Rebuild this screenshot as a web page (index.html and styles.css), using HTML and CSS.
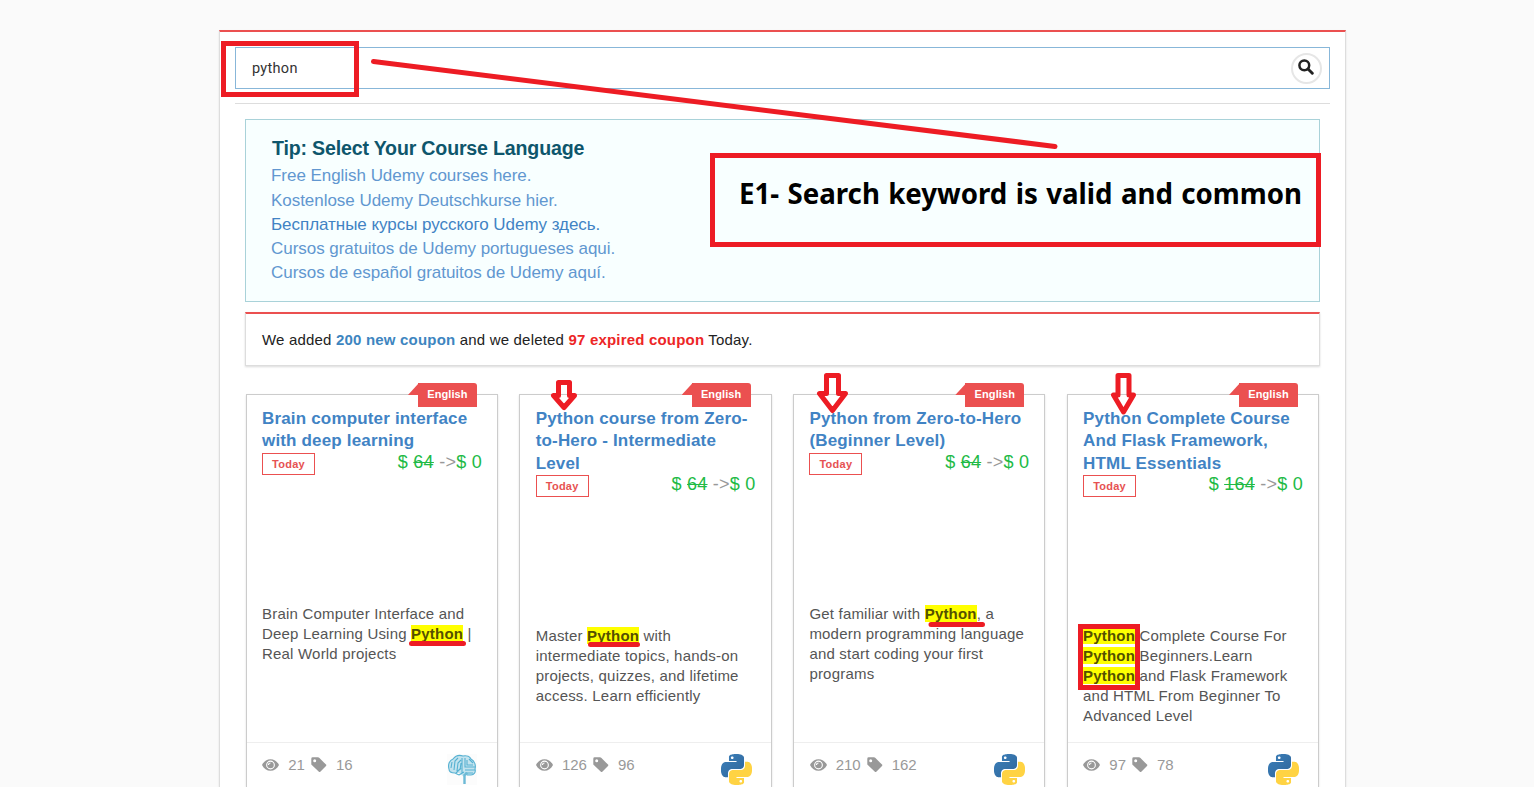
FILE: index.html
```html
<!DOCTYPE html>
<html lang="en">
<head>
<meta charset="utf-8">
<title>Course search</title>
<link rel="stylesheet" href="styles.css">
</head>
<body>
<svg width="0" height="0" class="defs">
  <defs>
    <linearGradient id="blue" x1="0" y1="0" x2="1" y2="1"><stop offset="0" stop-color="#3b80bb"/><stop offset="1" stop-color="#30669a"/></linearGradient>
    <path id="snake" d="M14.25.18l.9.2.73.26.59.3.45.32.34.34.25.34.16.33.1.3.04.26.02.2-.01.13V8.5l-.05.63-.13.55-.21.46-.26.38-.3.31-.33.25-.35.19-.35.14-.33.1-.3.07-.26.04-.21.02H8.77l-.69.05-.59.14-.5.22-.41.27-.33.32-.27.35-.2.36-.15.37-.1.35-.07.32-.04.27-.02.21v3.06H3.17l-.21-.03-.28-.07-.32-.12-.35-.18-.36-.26-.36-.36-.35-.46-.32-.59-.28-.73-.21-.88-.14-1.05-.05-1.23.06-1.22.16-1.04.24-.87.32-.71.36-.57.4-.44.42-.33.42-.24.4-.16.36-.1.32-.05.24-.01h.16l.06.01h8.16v-.83H6.18l-.01-2.75-.02-.37.05-.34.11-.31.17-.28.25-.26.31-.23.38-.2.44-.18.51-.15.58-.12.64-.1.71-.06.77-.04.84-.02 1.27.05zm-6.3 1.98l-.23.33-.08.41.08.41.23.34.33.22.41.09.41-.09.33-.22.23-.34.08-.41-.08-.41-.23-.33-.33-.22-.41-.09-.41.09z"/>
    <symbol id="python" viewBox="0 0 24 24"><use href="#snake" fill="url(#blue)"/><use href="#snake" fill="#ffd343" transform="rotate(180 12 12)"/></symbol>
    <symbol id="eye" viewBox="0 0 17 12"><path fill="#999" fill-rule="evenodd" d="M0 6C1.800 2.200 4.900.2 8.500.2S15.200 2.200 17 6c-1.800 3.800-4.900 5.800-8.500 5.800S1.800 9.800 0 6zM8.500 1.600a4.400 4.400 0 1 0 0 8.800 4.400 4.400 0 0 0 0-8.800z"/><circle cx="8.500" cy="6" r="3.300" fill="#999"/><path d="M6.500 6a2 2 0 0 1 2-2" fill="none" stroke="#fff" stroke-width="1.100"/></symbol>
    <symbol id="tag" viewBox="0 0 16 16"><path fill="#999" fill-rule="evenodd" d="M.3 1.700Q.3.300 1.700.300H7q.7 0 1.200.500l6.800 6.800q.7.700 0 1.400l-5.700 5.700q-.7.700-1.400 0L.8 8.100Q.3 7.600.3 6.900zM3.700 2.200a1.500 1.500 0 1 0 0 3 1.500 1.500 0 0 0 0-3z"/></symbol>
    <symbol id="brain" viewBox="0 0 31 31"><rect width="30" height="31" fill="#fcfcfc"/><path fill="#c3e3ee" d="M2 15C.5 10 3 6 6 5c3-4 7-4 10-3 4-1 7 1 8 3 4 2 5 7 4 10 1 3-1 6-4 6h-4l-3 2-5-4C7 19 3 19 2 15z"/><g fill="none" stroke="#56b1d2" stroke-width="1.100"><path d="M2 15C.5 10 3 6 6 5c3-4 7-4 10-3 4-1 7 1 8 3 4 2 5 7 4 10 1 3-1 6-4 6h-4M2 15c0 3 3 4 6 4l4 2"/><path d="M4 14l1-6M7 16l1-9 3-3M10 17l1-8 3-3M13 16l1-7M15 4v15M9 19l5-5M18 4v9h10M20 6v5h6M22 5l4 4M18 16h10M18 19h8M12 21l5-3"/></g><path fill="none" stroke="#6dbad6" stroke-width="2.400" d="M17.500 30V21l3-2"/></symbol>
  </defs>
</svg>
<main class="page">
  <div class="search"><input class="query" type="text" value="python" aria-label="Search"><button class="go" aria-label="Search"><svg width="16" height="16" viewBox="0 0 16 16"><circle cx="6.300" cy="6.300" r="4.900" fill="none" stroke="#222" stroke-width="2.500"/><path d="M10 10l4.300 4.200" stroke="#222" stroke-width="2.900" stroke-linecap="round"/></svg></button></div>
  <section class="results">
    <div class="tip">
      <h2 class="tip-title">Tip: Select Your Course Language</h2>
      <a class="lang first">Free English Udemy courses here.</a>
      <a class="lang">Kostenlose Udemy Deutschkurse hier.</a>
      <a class="lang strong">Бесплатные курсы русского Udemy здесь.</a>
      <a class="lang">Cursos gratuitos de Udemy portugueses aqui.</a>
      <a class="lang">Cursos de español gratuitos de Udemy aquí.</a>
    </div>
    <div class="notice">We added <b class="new">200 new coupon</b> and we deleted <b class="expired">97 expired coupon</b> Today.</div>
    <div class="cards">
      <article class="card">
        <span class="ribbon">English</span>
        <div class="body">
          <h3 class="title">Brain computer interface<br>with deep learning</h3>
          <div class="meta"><span class="today">Today</span><span class="price">$ <s>64</s> <i>-&gt;</i>$ 0</span></div>
          <p class="desc">Brain Computer Interface and<br>Deep Learning Using <mark>Python</mark> |<br>Real World projects</p>
        </div>
        <footer class="foot"><svg class="eye"><use href="#eye"/></svg><span class="views">21</span><svg class="tag"><use href="#tag"/></svg><span class="uses">16</span><svg class="logo"><use href="#brain"/></svg></footer>
      </article>
      <article class="card">
        <span class="ribbon">English</span>
        <div class="body">
          <h3 class="title">Python course from Zero-<br>to-Hero - Intermediate<br>Level</h3>
          <div class="meta"><span class="today">Today</span><span class="price">$ <s>64</s> <i>-&gt;</i>$ 0</span></div>
          <p class="desc">Master <mark>Python</mark> with<br>intermediate topics, hands-on<br>projects, quizzes, and lifetime<br>access. Learn efficiently</p>
        </div>
        <footer class="foot"><svg class="eye"><use href="#eye"/></svg><span class="views">126</span><svg class="tag"><use href="#tag"/></svg><span class="uses">96</span><svg class="logo"><use href="#python"/></svg></footer>
      </article>
      <article class="card">
        <span class="ribbon">English</span>
        <div class="body">
          <h3 class="title">Python from Zero-to-Hero<br>(Beginner Level)</h3>
          <div class="meta"><span class="today">Today</span><span class="price">$ <s>64</s> <i>-&gt;</i>$ 0</span></div>
          <p class="desc">Get familiar with <mark>Python</mark>, a<br>modern programming language<br>and start coding your first<br>programs</p>
        </div>
        <footer class="foot"><svg class="eye"><use href="#eye"/></svg><span class="views">210</span><svg class="tag"><use href="#tag"/></svg><span class="uses">162</span><svg class="logo"><use href="#python"/></svg></footer>
      </article>
      <article class="card">
        <span class="ribbon">English</span>
        <div class="body">
          <h3 class="title">Python Complete Course<br>And Flask Framework,<br>HTML Essentials</h3>
          <div class="meta"><span class="today">Today</span><span class="price">$ <s>164</s> <i>-&gt;</i>$ 0</span></div>
          <p class="desc"><mark>Python</mark> Complete Course For<br><mark>Python</mark> Beginners.Learn<br><mark>Python</mark> and Flask Framework<br>and HTML From Beginner To<br>Advanced Level</p>
        </div>
        <footer class="foot"><svg class="eye"><use href="#eye"/></svg><span class="views">97</span><svg class="tag"><use href="#tag"/></svg><span class="uses">78</span><svg class="logo"><use href="#python"/></svg></footer>
      </article>
    </div>
  </section>
</main>
<svg class="notes" width="1534" height="787" viewBox="0 0 1534 787">
  <g fill="none" stroke="#ed1c24" stroke-width="5">
    <path d="M223.500 43.500H356.500V94.500H223.500zM712.500 155.500H1318.500V244.500H712.500zM1080.500 626.500H1137.500V687.500H1080.500z"/>
    <path stroke-linecap="round" d="M373.500 61.500L1055 146.500M411.500 643.500H463.500M590.500 644.500H637.500M931 624.500H982.500"/>
    <path stroke-linejoin="round" d="M558.500 382.500H569.500V395.500H574.500L564 407.500L553.500 395.500H558.500zM826.500 375.500H838.500V393.500H845.500L832.500 410.500L819.500 393.500H826.500zM1118 375.500H1129V395H1133.500L1123.500 412L1113.500 395H1118z"/>
  </g>
  <text class="note" x="739" y="204" textLength="563" lengthAdjust="spacingAndGlyphs">E1- Search keyword is valid and common</text>
</svg>
</body>
</html>
```
FILE: styles.css
```css
* { box-sizing: border-box; }
body { margin: 0; height: 787px; overflow: hidden; background: #fafafa; font-family: "Liberation Sans", Arial, sans-serif; color: #222; }
.defs { position: absolute; }
.page { width: 1127px; height: 757px; margin: 30px 0 0 219px; padding: 15px 15px 0; background: #fff; border: 1px solid #ddd; border-top: 2px solid #eb5050; border-bottom: 0; box-shadow: 0 1px 2px rgba(0,0,0,.1); }
.search { display: flex; align-items: center; height: 42px; padding: 0 7px 0 16px; border: 1px solid #88b7d9; }
.query { flex: 1; padding: 0; border: 0; outline: 0; background: none; font: 14.500px Roboto, sans-serif; letter-spacing: .3px; color: #333; }
.go { display: flex; align-items: center; justify-content: center; width: 31px; height: 31px; padding: 0 1px 3px 0; border: 2px solid #e6e6e6; border-radius: 50%; background: #fff; }
.results { margin-top: 14px; padding: 15px 10px 0; border-top: 1px solid #ddd; }
.tip { height: 183px; padding: 16px 25px; border: 1px solid #a9d2d9; background: #f8ffff; }
.tip-title { margin: 0; padding-left: 1px; font-size: 19.600px; line-height: 25px; letter-spacing: -.18px; color: #0e566c; }
.lang { display: block; font-size: 17px; line-height: 24px; color: #6197d0; letter-spacing: -.04px; }
.lang.first { padding: 3px 0 1px; }
.lang.strong { color: #4183c4; }
.notice { height: 54px; margin-top: 10px; padding: 0 16px; border: 1px solid #ddd; border-top: 2px solid #eb5050; box-shadow: 0 1px 2px rgba(0,0,0,.15); font-size: 15px; line-height: 51px; letter-spacing: .19px; }
.new { color: #3d85c0; }
.expired { color: #ed2626; }
.cards { display: grid; grid-template-columns: repeat(4, 252.200px); gap: 21.500px; margin: 28px 0 0 .75px; }
.card { position: relative; height: 393px; border: 1px solid #ccc; border-bottom: 0; box-shadow: 0 1px 2px rgba(0,0,0,.12); }
.ribbon { position: absolute; right: 20px; top: -12px; width: 59px; height: 24px; border-radius: 0 3px 0 0; background: #eb5050; color: #fff; font-weight: bold; font-size: 11px; line-height: 22px; text-align: center; letter-spacing: .1px; }
.ribbon::before { content: ""; position: absolute; left: -10px; top: 0; width: 11px; height: 12px; background: #eb5050; clip-path: polygon(100% 0, 100% 100%, 0 100%); }
.body { height: 347px; padding: 13px 15px 0 15.250px; }
.title { margin: 0; font-size: 17px; line-height: 22.300px; color: #4183c4; letter-spacing: .17px; white-space: nowrap; }
.meta { display: flex; justify-content: space-between; align-items: flex-start; height: 151px; }
.today { width: 53px; height: 22px; border: 1px solid #eb5050; color: #e65252; font-weight: bold; font-size: 11px; line-height: 20px; text-align: center; letter-spacing: .25px; }
.price { color: #21ba45; font-size: 18px; line-height: 18px; letter-spacing: .25px; }
.price i { color: #999; font-style: normal; }
.desc { margin: 0; font-size: 15px; line-height: 20px; color: #555; letter-spacing: .2px; white-space: nowrap; }
.desc mark { background: #ff0; color: #555000; font-weight: bold; }
.foot { display: flex; align-items: flex-start; height: 45px; padding: 11px 15px 0 15.250px; border-top: 1px solid #eee; color: #999; font-size: 15px; line-height: 22px; }
.foot .eye { width: 17px; height: 12px; margin: 5px 9px 0 .25px; }
.foot .tag { width: 16px; height: 16px; margin: 3px 9px 0 6px; }
.foot .logo { width: 31px; height: 31px; margin: 0 4px 0 auto; }
.notes { position: absolute; left: 0; top: 0; }
.note { font: bold 28.500px "Noto Sans", "Open Sans", sans-serif; word-spacing: 1.200px; fill: #000; }
```
